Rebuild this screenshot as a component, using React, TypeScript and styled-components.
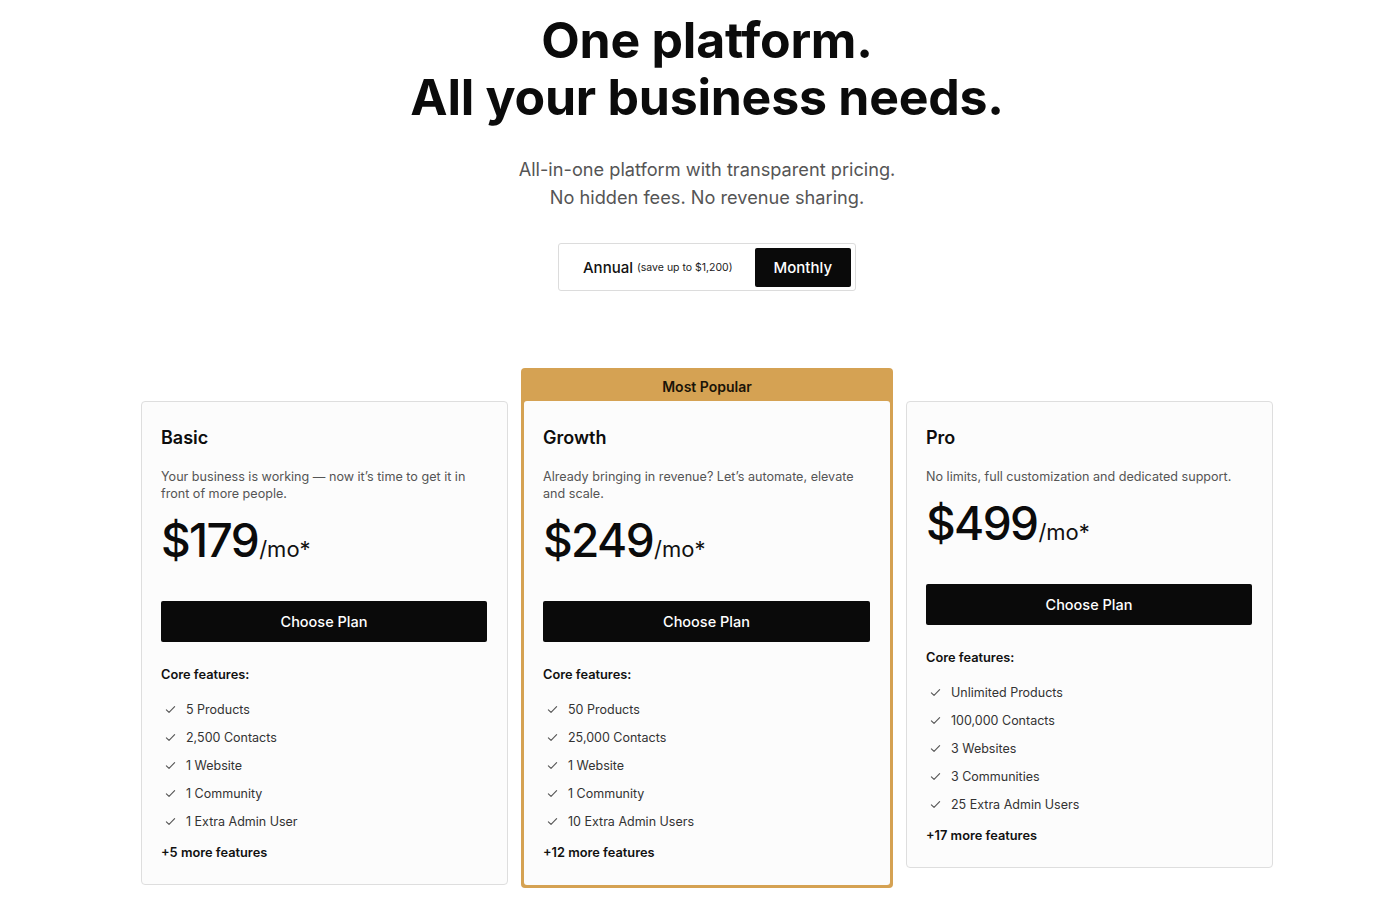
import React from "react";
import styled, { createGlobalStyle } from "styled-components";

const Global = createGlobalStyle`
  html, body { margin: 0; padding: 0; background: #ffffff; }
  body { font-family: Inter, "Noto Sans", sans-serif; color: #0d0d0d; -webkit-font-smoothing: antialiased; }
  * { box-sizing: border-box; }
`;

const Page = styled.main`
  width: 1400px;
  padding: 12px 0 0 14px;
  display: flex;
  flex-direction: column;
  align-items: center;
`;

const Title = styled.h1`
  margin: 0;
  font-size: 50px;
  line-height: 57px;
  font-weight: 700;
  letter-spacing: -0.005em;
  text-align: center;
  color: #0b0b0b;
`;

const Subtitle = styled.p`
  margin: 29px 0 0;
  font-size: 18.2px;
  line-height: 28px;
  color: #555555;
  text-align: center;
`;

const Toggle = styled.div`
  margin-top: 32px;
  display: flex;
  align-items: center;
  height: 48px;
  padding: 3px 4px 3px 0;
  border: 1px solid #dcdcdc;
  border-radius: 3px;
  background: #fff;
`;

const ToggleOption = styled.button<{ $active?: boolean }>`
  border: 0;
  height: 39px;
  display: flex;
  align-items: center;
  gap: 4px;
  font-family: inherit;
  cursor: pointer;
  border-radius: 2px;
  padding: ${(p) => (p.$active ? "0 19px" : "0 22px 0 24px")};
  background: ${(p) => (p.$active ? "#0a0a0a" : "transparent")};
  color: ${(p) => (p.$active ? "#ffffff" : "#111111")};
  font-size: 15px;
  font-weight: 500;
`;

const Save = styled.span`
  font-size: 10.5px;
  font-weight: 400;
  color: #222;
`;

const Cards = styled.section`
  margin-top: 110px;
  display: flex;
  align-items: flex-start;
  gap: 13px;
`;

const Card = styled.div`
  width: 367px;
  background: #fcfcfc;
  border: 1px solid #dedede;
  border-radius: 4px;
  padding: 24px 20px 23px 19px;
`;

const FeaturedWrap = styled.div`
  width: 372px;
  margin-top: -33px;
  background: #d5a253;
  border-radius: 4px;
  padding: 0 3px 3px;
  display: flex;
  flex-direction: column;
`;

const Badge = styled.div`
  height: 33px;
  padding-top: 4px;
  display: flex;
  align-items: center;
  justify-content: center;
  font-size: 14px;
  font-weight: 600;
  color: #1a1408;
`;

const FeaturedCard = styled.div`
  background: #fcfcfc;
  border-radius: 3px;
  padding: 25px 20px 24px 19px;
`;

const PlanName = styled.h2`
  margin: 0;
  font-size: 18px;
  line-height: 24px;
  font-weight: 600;
  color: #0d0d0d;
`;

const Description = styled.p`
  margin: 18px 0 0;
  font-size: 12.6px;
  line-height: 17px;
  color: #555555;
`;

const PriceRow = styled.div`
  margin-top: 15px;
  display: flex;
  align-items: baseline;
  line-height: 46px;
`;

const Amount = styled.span`
  font-size: 46px;
  font-weight: 500;
  letter-spacing: -0.035em;
  color: #0b0b0b;
`;

const Per = styled.span`
  font-size: 22px;
  font-weight: 400;
  margin-left: 1px;
  color: #111;
`;

const ChooseButton = styled.button`
  margin-top: 29px;
  width: 100%;
  height: 41px;
  border: 0;
  border-radius: 2px;
  background: #0a0a0a;
  color: #fff;
  font-family: inherit;
  font-size: 14.5px;
  font-weight: 500;
  cursor: pointer;
`;

const CoreLabel = styled.div`
  margin-top: 24px;
  font-size: 12.8px;
  line-height: 17px;
  font-weight: 600;
  color: #111;
`;

const FeatureList = styled.ul`
  list-style: none;
  margin: 16px 0 0;
  padding: 0;
  display: flex;
  flex-direction: column;
  gap: 8px;
`;

const Feature = styled.li`
  display: flex;
  align-items: center;
  height: 20px;
  font-size: 12.5px;
  color: #333;
`;

const CheckIcon = styled.svg`
  width: 11px;
  height: 11px;
  margin: 0 10px 0 4px;
  flex: none;
`;

const More = styled.div`
  margin-top: 13px;
  font-size: 12.8px;
  line-height: 17px;
  font-weight: 600;
  color: #111;
`;

type Plan = {
  name: string;
  desc: string;
  price: string;
  features: string[];
  more: string;
};

const plans: Plan[] = [
  {
    name: "Basic",
    desc: "Your business is working — now it’s time to get it in front of more people.",
    price: "$179",
    features: ["5 Products", "2,500 Contacts", "1 Website", "1 Community", "1 Extra Admin User"],
    more: "+5 more features",
  },
  {
    name: "Growth",
    desc: "Already bringing in revenue? Let’s automate, elevate and scale.",
    price: "$249",
    features: ["50 Products", "25,000 Contacts", "1 Website", "1 Community", "10 Extra Admin Users"],
    more: "+12 more features",
  },
  {
    name: "Pro",
    desc: "No limits, full customization and dedicated support.",
    price: "$499",
    features: ["Unlimited Products", "100,000 Contacts", "3 Websites", "3 Communities", "25 Extra Admin Users"],
    more: "+17 more features",
  },
];

const Check = () => (
  <CheckIcon viewBox="0 0 12 12" fill="none">
    <path d="M1.5 6.3 L4.4 9.2 L10.5 2.8" stroke="#555" strokeWidth="1.2" strokeLinecap="round" strokeLinejoin="round" />
  </CheckIcon>
);

const PlanBody = ({ plan }: { plan: Plan }) => (
  <>
    <PlanName>{plan.name}</PlanName>
    <Description>{plan.desc}</Description>
    <PriceRow>
      <Amount>{plan.price}</Amount>
      <Per>/mo*</Per>
    </PriceRow>
    <ChooseButton>Choose Plan</ChooseButton>
    <CoreLabel>Core features:</CoreLabel>
    <FeatureList>
      {plan.features.map((f) => (
        <Feature key={f}>
          <Check />
          {f}
        </Feature>
      ))}
    </FeatureList>
    <More>{plan.more}</More>
  </>
);

export default function App() {
  return (
    <>
      <Global />
      <Page>
        <Title>
          One platform.
          <br />
          All your business needs.
        </Title>
        <Subtitle>
          All-in-one platform with transparent pricing.
          <br />
          No hidden fees. No revenue sharing.
        </Subtitle>
        <Toggle>
          <ToggleOption>
            Annual <Save>(save up to $1,200)</Save>
          </ToggleOption>
          <ToggleOption $active>Monthly</ToggleOption>
        </Toggle>
        <Cards>
          <Card>
            <PlanBody plan={plans[0]} />
          </Card>
          <FeaturedWrap>
            <Badge>Most Popular</Badge>
            <FeaturedCard>
              <PlanBody plan={plans[1]} />
            </FeaturedCard>
          </FeaturedWrap>
          <Card>
            <PlanBody plan={plans[2]} />
          </Card>
        </Cards>
      </Page>
    </>
  );
}
